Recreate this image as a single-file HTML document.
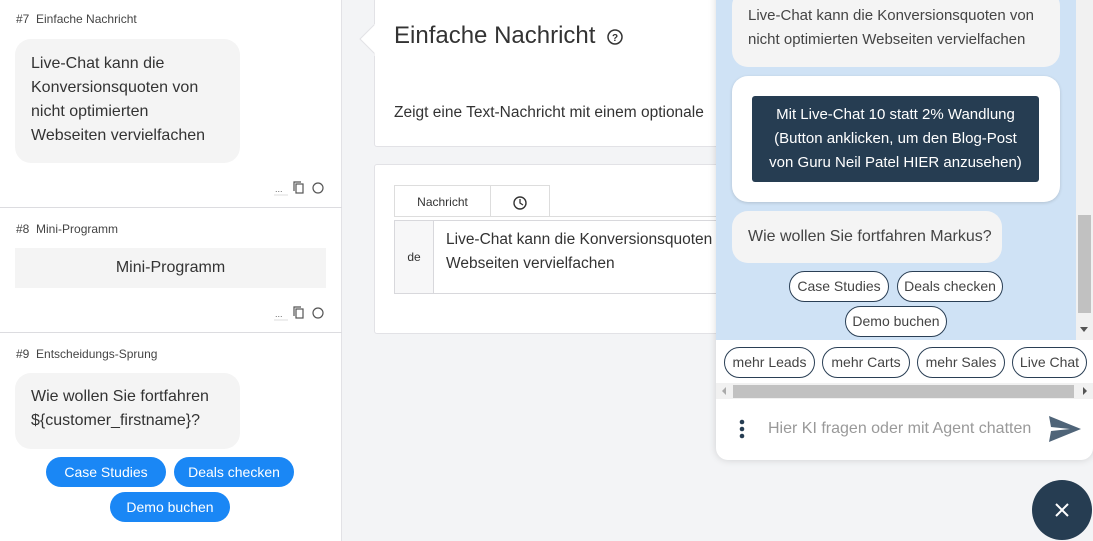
<!DOCTYPE html>
<html><head><meta charset="utf-8"><style>
*{box-sizing:border-box;margin:0;padding:0}
body{width:1093px;height:541px;overflow:hidden;background:#f3f4f6;font-family:"Liberation Sans",Roboto,sans-serif;position:relative;color:#333}
.a{position:absolute}
.lbl{font-size:12px;color:#444}
.bub{background:#f4f4f4;border-radius:16px;font-size:16px;line-height:24px;color:#333}
.bb{background:#1a87f5;color:#fff;border-radius:16px;font-size:14px;text-align:center;line-height:30px;height:30px}
.chip{border:1.5px solid #2a3f55;border-radius:16px;background:#fff;font-size:14px;color:#444;text-align:center;height:31px;line-height:28px;white-space:nowrap}
</style></head><body>
<div class="a" style="left:0;top:0;width:342px;height:541px;background:#fff;border-right:1px solid #e2e2e6"></div>
<div class="a lbl" style="left:16px;top:12px">#7&nbsp; Einfache Nachricht</div>
<div class="a bub" style="left:15px;top:39px;width:225px;height:124px;padding:13px 16px">Live-Chat kann die Konversionsquoten von nicht optimierten Webseiten vervielfachen</div>
<div class="a" style="left:0;top:207px;width:342px;height:1px;background:#dcdce0"></div>
<div class="a lbl" style="left:16px;top:222px">#8&nbsp; Mini-Programm</div>
<div class="a" style="left:15px;top:248px;width:311px;height:40px;background:#f4f4f4;font-size:16px;text-align:center;line-height:40px">Mini-Programm</div>
<div class="a" style="left:0;top:332px;width:342px;height:1px;background:#dcdce0"></div>
<div class="a lbl" style="left:16px;top:347px">#9&nbsp; Entscheidungs-Sprung</div>
<div class="a bub" style="left:15px;top:373px;width:225px;height:76px;padding:12px 16px">Wie wollen Sie fortfahren ${customer_firstname}?</div>
<div class="a bb" style="left:46px;top:457px;width:120px">Case Studies</div>
<div class="a bb" style="left:174px;top:457px;width:120px">Deals checken</div>
<div class="a bb" style="left:110px;top:492px;width:120px">Demo buchen</div>
<svg class="a" style="left:272px;top:180px" width="56" height="16"><text x="3" y="12" font-size="9" fill="#666">...</text><line x1="2" y1="15" x2="16" y2="15" stroke="#ddd"/><rect x="24" y="4" width="7" height="9" fill="none" stroke="#555" stroke-width="1.2"/><path d="M22 11V2h7" fill="none" stroke="#555" stroke-width="1.2"/><circle cx="46" cy="8" r="5" fill="none" stroke="#555" stroke-width="1.2"/></svg>
<svg class="a" style="left:272px;top:305px" width="56" height="16"><text x="3" y="12" font-size="9" fill="#666">...</text><line x1="2" y1="15" x2="16" y2="15" stroke="#ddd"/><rect x="24" y="4" width="7" height="9" fill="none" stroke="#555" stroke-width="1.2"/><path d="M22 11V2h7" fill="none" stroke="#555" stroke-width="1.2"/><circle cx="46" cy="8" r="5" fill="none" stroke="#555" stroke-width="1.2"/></svg>
<div class="a" style="left:374px;top:-2px;width:400px;height:149px;background:#fff;border:1px solid #e2e2e6;border-radius:3px"></div>
<svg class="a" style="left:359px;top:24px" width="17" height="32"><path d="M16 0L1 15L16 30" fill="#fff" stroke="#e2e2e6"/><rect x="15.5" y="0" width="2" height="32" fill="#fff"/></svg>
<div class="a" style="left:394px;top:22px;font-size:24px;color:#333">Einfache Nachricht</div>
<svg class="a" style="left:606px;top:28px" width="18" height="18"><circle cx="9" cy="9" r="7" fill="none" stroke="#333" stroke-width="1.5"/><text x="9" y="13" font-size="10" text-anchor="middle" fill="#333" font-weight="bold">?</text></svg>
<div class="a" style="left:394px;top:104px;font-size:15.5px;color:#333;white-space:nowrap">Zeigt eine Text-Nachricht mit einem optionale</div>
<div class="a" style="left:374px;top:164px;width:400px;height:170px;background:#fff;border:1px solid #e2e2e6;border-radius:3px"></div>
<div class="a" style="left:394px;top:185px;width:97px;height:32px;border:1px solid #ddd;border-bottom:none;background:#fff;font-size:12px;text-align:center;line-height:32px">Nachricht</div>
<div class="a" style="left:490px;top:185px;width:60px;height:31px;border:1px solid #ddd;border-bottom:none"></div>
<svg class="a" style="left:512px;top:195px" width="16" height="16"><circle cx="8" cy="8" r="6" fill="none" stroke="#333" stroke-width="1.4"/><path d="M8 4v4l3 2" fill="none" stroke="#333" stroke-width="1.3"/></svg>
<div class="a" style="left:394px;top:216px;width:400px;height:1px;background:#ddd"></div>
<div class="a" style="left:394px;top:220px;width:400px;height:74px;border:1px solid #d8d8dc;background:#fff"></div>
<div class="a" style="left:395px;top:221px;width:39px;height:72px;background:#f7f7f8;border-right:1px solid #d8d8dc;font-size:12px;text-align:center;line-height:72px">de</div>
<div class="a" style="left:446px;top:228px;font-size:15.5px;line-height:24px;color:#333;white-space:nowrap">Live-Chat kann die Konversionsquoten<br>Webseiten vervielfachen</div>
<div class="a" style="left:716px;top:-10px;width:377px;height:470px;background:#fff;border-radius:0 0 12px 12px;box-shadow:0 0 8px rgba(0,0,0,.15);overflow:hidden">
 <div class="a" style="left:0;top:0;width:377px;height:350px;background:#cfe2f5"></div>
 <div class="a" style="left:360px;top:10px;width:17px;height:340px;background:#f1f1f1"></div>
 <div class="a" style="left:362px;top:225px;width:13px;height:98px;background:#c1c1c1"></div>
 <svg class="a" style="left:363px;top:335px" width="10" height="8"><path d="M1 2h8L5 7z" fill="#555"/></svg>
 <div class="a bub" style="left:16px;top:0;width:328px;height:77px;padding:14px 0 0 16px;font-size:15px;line-height:24px;color:#444;white-space:nowrap">Live-Chat kann die Konversionsquoten von<br>nicht optimierten Webseiten vervielfachen</div>
 <div class="a" style="left:16px;top:86px;width:328px;height:126px;background:#fff;border-radius:16px;box-shadow:0 1px 3px rgba(0,0,0,.15)"></div>
 <div class="a" style="left:36px;top:106px;width:287px;height:86px;background:#263d52;border-radius:3px;color:#fff;font-size:15px;line-height:24px;text-align:center;padding-top:7px;white-space:nowrap">Mit Live-Chat 10 statt 2% Wandlung<br>(Button anklicken, um den Blog-Post<br>von Guru Neil Patel HIER anzusehen)</div>
 <div class="a bub" style="left:16px;top:221px;width:270px;height:52px;line-height:52px;padding-left:16px;color:#444">Wie wollen Sie fortfahren Markus?</div>
 <div class="a chip" style="left:73px;top:281px;width:100px">Case Studies</div>
 <div class="a chip" style="left:181px;top:281px;width:106px">Deals checken</div>
 <div class="a chip" style="left:129px;top:316px;width:102px">Demo buchen</div>
 <div class="a chip" style="left:8px;top:357px;width:91px">mehr Leads</div>
 <div class="a chip" style="left:106px;top:357px;width:88px">mehr Carts</div>
 <div class="a chip" style="left:201px;top:357px;width:88px">mehr Sales</div>
 <div class="a chip" style="left:296px;top:357px;width:75px">Live Chat</div>
 <div class="a" style="left:0;top:393px;width:377px;height:16px;background:#f1f1f1"></div>
 <div class="a" style="left:17px;top:395px;width:341px;height:13px;background:#c1c1c1"></div>
 <svg class="a" style="left:4px;top:396px" width="370" height="10"><path d="M6 1v8L2 5z" fill="#aaa"/><path d="M363 1v8l4-4z" fill="#555"/></svg>
 <svg class="a" style="left:22px;top:429px" width="8" height="22"><circle cx="4" cy="3" r="2.3" fill="#263d52"/><circle cx="4" cy="10" r="2.3" fill="#263d52"/><circle cx="4" cy="17" r="2.3" fill="#263d52"/></svg>
 <div class="a" style="left:52px;top:430px;font-size:16px;color:#999">Hier KI fragen oder mit Agent chatten</div>
 <svg class="a" style="left:332px;top:425px" width="34" height="28"><path d="M1 1L33 14L1 27L3 16L22 14L3 12Z" fill="#4f6478"/></svg>
</div>
<div class="a" style="left:1032px;top:480px;width:60px;height:60px;border-radius:50%;background:#263d52"></div>
<svg class="a" style="left:1054px;top:502px" width="16" height="16"><path d="M2 2L14 14M14 2L2 14" stroke="#fff" stroke-width="2"/></svg>
</body></html>
